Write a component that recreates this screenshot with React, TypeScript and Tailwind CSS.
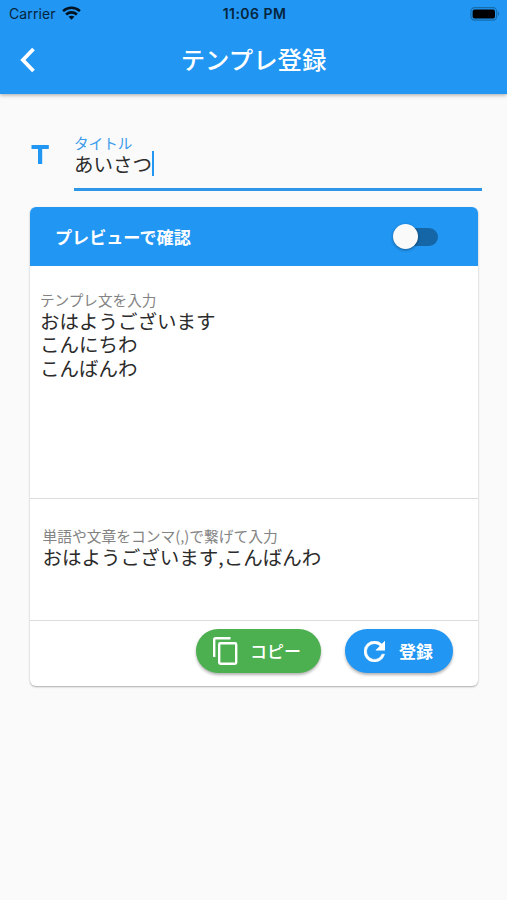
import type { ReactNode } from "react";

function StatusBar() {
  return (
    <div className="grid h-[27px] grid-cols-3 items-center pr-[7px] pl-[9px] font-['Inter',sans-serif] text-[14px] text-[#06253d]">
      <div className="flex items-center gap-[6px]">
        <span className="tracking-[0.12px]">Carrier</span>
        <svg className="-mt-px" width="19" height="14" viewBox="0 0 19 14" fill="none" stroke="#03121f" strokeWidth="2.6">
          <path d="M1.1 5.1C5.9.7 13.1.7 17.9 5.1M4.1 8.5c3.1-2.8 7.7-2.8 10.8 0" />
          <path d="M9.5 13.8l-2.9-3c1.6-1.4 4.2-1.4 5.8 0z" fill="#03121f" stroke="none" />
        </svg>
      </div>
      <span className="text-center font-semibold tracking-[0.45px] whitespace-nowrap">11:06 PM</span>
      <svg className="justify-self-end" width="30" height="14" viewBox="0 0 30 14">
        <rect x=".9" y=".7" width="25.8" height="12.4" rx="3.8" fill="none" stroke="#176cac" strokeWidth="1.2" />
        <rect x="2.6" y="2.4" width="22.4" height="9" rx="2" fill="#000" />
        <path d="M28 4.8c1.6.7 1.6 3.5 0 4.2z" fill="#176cac" />
      </svg>
    </div>
  );
}

function Header() {
  return (
    <header className="z-10 h-[94px] shrink-0 bg-[#2196f3] shadow-[0_1px_4px_rgba(0,0,0,0.35)]">
      <StatusBar />
      <div className="grid h-[65px] grid-cols-[60px_1fr_60px] items-center">
        <svg className="ml-[19px]" width="18" height="26" viewBox="0 0 18 26" fill="none" stroke="#fff" strokeWidth="3.8">
          <path d="M14.5 2L3.9 13l10.6 11" />
        </svg>
        <h1 className="text-center text-[24.4px] leading-none font-medium whitespace-nowrap text-white">テンプレ登録</h1>
      </div>
    </header>
  );
}

function PillButton({ className, children }: { className: string; children: ReactNode }) {
  return (
    <button
      className={
        "flex h-[44px] items-center rounded-full text-[17px] leading-none font-bold text-white shadow-[0_2px_3px_rgba(0,0,0,0.3)] " +
        className
      }
    >
      {children}
    </button>
  );
}

export default function App() {
  return (
    <div className="flex h-[900px] w-[507px] flex-col overflow-hidden bg-[#fafafa] font-['Noto_Sans_CJK_JP',sans-serif] text-[#2b2b2b]">
      <Header />
      <main className="px-[30px] pt-[40px]">
        <div className="-mr-[5px] flex h-[57px]">
          <svg className="mt-[11px] mr-[25px] ml-px" width="18" height="19" viewBox="0 0 18 19" fill="#2196f3">
            <path d="M.5 0h17.3v3.9h-6.6V19H7V3.9H.5z" />
          </svg>
          <div className="flex-1 border-b-[3px] border-[#2d96e6]">
            <div className="text-[14.6px] leading-[18px] text-[#3a9bea]">タイトル</div>
            <div className="-mt-px flex h-[25px] items-center text-[19.5px] leading-[24px]">
              <span>あいさつ</span>
              <span className="h-[25px] w-[2px] bg-[#2196f3]" />
            </div>
          </div>
        </div>

        <section className="mt-[16px] flex h-[479px] w-[448px] flex-col overflow-hidden rounded-[6px] bg-white shadow-[0_1px_2px_rgba(0,0,0,0.32)]">
          <div className="flex h-[59px] shrink-0 items-center justify-between bg-[#2196f3] pr-[40px] pl-[25px]">
            <span className="text-[17.1px] leading-none font-bold text-white">プレビューで確認</span>
            <div className="flex h-[18px] w-[45px] items-center rounded-full bg-[#1466a7]">
              <span className="size-[25px] shrink-0 rounded-full bg-[#fafafa] shadow-[0_1px_3px_rgba(0,0,0,0.4)]" />
            </div>
          </div>
          <div className="h-[233px] shrink-0 border-b border-[#dcdcdc] px-[10px] pt-[25px]">
            <div className="text-[14.6px] leading-[18px] text-[#838383]">テンプレ文を入力</div>
            <div className="text-[19.5px] leading-[23.4px]">
              <p>おはようございます</p>
              <p>こんにちわ</p>
              <p>こんばんわ</p>
            </div>
          </div>
          <div className="h-[122px] shrink-0 border-b border-[#dcdcdc] px-[12.5px] pt-[28px]">
            <div className="text-[14.75px] leading-[18px] text-[#838383]">単語や文章をコンマ(,)で繋げて入力</div>
            <p className="text-[19.55px] leading-[23.4px]">おはようございます,こんばんわ</p>
          </div>
          <div className="flex justify-end gap-[24px] pt-[8px] pr-[25px]">
            <PillButton className="w-[125px] bg-[#4caf50] pl-[17px]">
              <svg className="mr-[12px]" width="25" height="28" viewBox="0 0 25 28" fill="none" stroke="#fff" strokeWidth="2.4">
                <path d="M1.2 20V2.5q0-1.3 1.3-1.3H17.5" />
                <rect x="6.2" y="6.2" width="17" height="20.5" rx="1.2" />
              </svg>
              <span className="-mt-[2px] font-medium">コピー</span>
            </PillButton>
            <PillButton className="w-[108px] bg-[#2196f3] pl-[19px]">
              <svg className="mr-[14px]" width="21" height="21" viewBox="4 4 16 16" fill="#fff" stroke="#fff" strokeWidth=".4">
                <path d="M17.65 6.35A7.96 7.96 0 0 0 12 4a8 8 0 1 0 7.73 10h-2.08A6 6 0 1 1 12 6c1.66 0 3.14.69 4.22 1.78L13 11h7V4z" />
              </svg>
              <span className="-mt-[2px]">登録</span>
            </PillButton>
          </div>
        </section>
      </main>
    </div>
  );
}
